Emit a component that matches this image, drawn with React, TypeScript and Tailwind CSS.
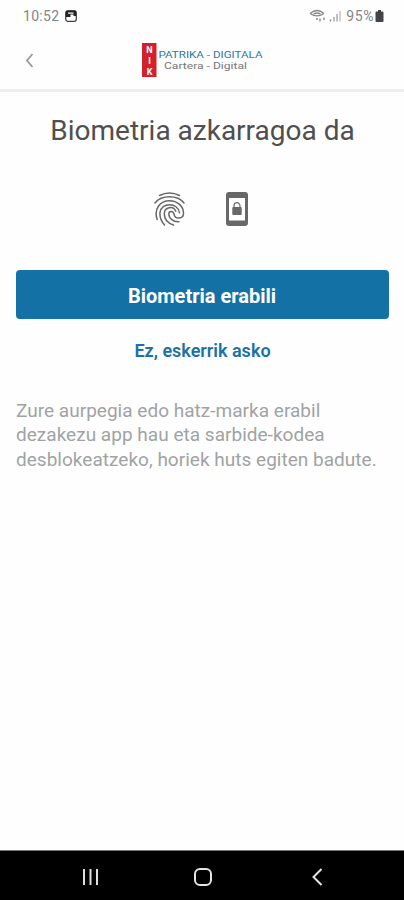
function StatusBar() {
  return (
    <div className="flex h-8 items-center justify-between pr-5 pl-[23px] text-[#858585]">
      <div className="flex items-center gap-1.5">
        <span className="text-[14px] leading-none tracking-[0.3px]">10:52</span>
        <svg className="size-3" viewBox="0 0 12 12">
          <rect x="0.7" y="0.7" width="10.6" height="10.6" rx="2.2" fill="#fff" stroke="#444" strokeWidth="1.300" />
          <path d="M1 1h10v5H8.500V4.500H5.500V7H1z" fill="#222" />
          <rect x="3" y="2.500" width="5.500" height="1.200" fill="#fff" />
        </svg>
      </div>
      <div className="flex items-center">
        <svg className="mr-0.5 h-3.5 w-[35px]" viewBox="0 0 35 14" fill="none" stroke="#888">
          <path d="M1 4.500Q8 -1.500 15 4.500M1.500 4.800Q8 9 14.500 4.800M4.500 5Q8 3 11.500 5" strokeWidth="1.300" />
          <path d="M7 10h2M11 9.500v3M15 8.500v2.500M21.500 10.500v2" strokeWidth="1.400" />
          <path d="M25 8v4.500M28 5v7.500" strokeWidth="1.500" stroke="#aaa" />
          <path d="M31 2v10.500" strokeWidth="1.300" stroke="#bbb" />
        </svg>
        <span className="text-[14px] leading-none tracking-[0.6px]">95%</span>
        <svg className="ml-px h-3 w-[9px]" viewBox="0 0 9 12" fill="#444">
          <path d="M3 0h3v1.500h1.500q1 0 1 1V11q0 1-1 1h-6q-1 0-1-1V2.500q0-1 1-1H3z" />
        </svg>
      </div>
    </div>
  )
}

function Logo() {
  return (
    <svg className="h-9 w-[124px]" viewBox="0 0 124 36" fontFamily="Roboto, sans-serif">
      <rect x="2" y="0" width="14.500" height="34" fill="#d3202b" />
      <g fill="#fff" fontSize="9" fontWeight="700" textAnchor="middle">
        <text x="9.500" y="9.500">N</text>
        <text x="9.500" y="20.500">I</text>
        <text x="9.500" y="31.500">K</text>
      </g>
      <text x="18.500" y="14.500" fontSize="9.500" fill="#2d77a5" textLength="104" lengthAdjust="spacingAndGlyphs">
        PATRIKA - DIGITALA
      </text>
      <text x="24" y="26" fontSize="9.500" fill="#777" textLength="83" lengthAdjust="spacingAndGlyphs">
        Cartera - Digital
      </text>
    </svg>
  )
}

function Header() {
  return (
    <header className="grid h-[60px] grid-cols-[1fr_124px_1fr] items-center border-b-3 border-[#eee]">
      <button type="button" aria-label="Atzera" className="ml-6 w-3">
        <svg className="h-4 w-3" viewBox="0 0 12 16" fill="none" stroke="#999" strokeWidth="1.800">
          <path d="M8.500 1 3 7.500 8.500 14" />
        </svg>
      </button>
      <Logo />
    </header>
  )
}

function FingerprintIcon() {
  return (
    <svg
      className="h-[34px] w-[31px]"
      viewBox="0 0 31 34"
      fill="none"
      stroke="#686868"
      strokeWidth="1.500"
      strokeLinecap="round"
    >
      <path d="M5.500 3.500Q15.500-1.500 25.500 3.500" />
      <path d="M1 11Q6 4.800 15.500 4.800T30 11" />
      <path d="M3.200 27.500C-.5 17 6 8.800 15.500 8.800c8 0 14 5.500 14 12.500 0 6-8.500 6.500-9.500.8-.6-3.500-5-3.600-5.200-.3 0 4.500 4.500 8.500 10.200 8" />
      <path d="M10.500 33C6.500 28.500 5.500 25 6 20.500c1.200-10.300 18-10.500 19.500.3" />
      <path d="M19.500 33C13 31 10.300 26.500 10.300 21.800c0-7 9-8.500 11.500-2.500" />
    </svg>
  )
}

function PhoneLockIcon() {
  return (
    <svg className="h-[34px] w-[22px]" viewBox="0 0 22 34">
      <rect width="22" height="34" rx="3" fill="#686868" />
      <rect x="3" y="6" width="16" height="22.500" fill="#fff" />
      <rect x="6.300" y="15" width="9.400" height="8" rx="1" fill="#686868" />
      <path d="M8 15.500v-1.800a3 3 0 0 1 6 0v1.800" fill="none" stroke="#686868" strokeWidth="1.200" />
    </svg>
  )
}

function NavigationBar() {
  return (
    <nav className="flex h-[50px] items-center justify-between border-t border-[#777] bg-black pt-0.5 pr-[81px] pl-[81px]">
      <svg className="h-5 w-5" viewBox="0 0 20 20" fill="none" stroke="#ddd" strokeWidth="2">
        <path d="M3 2v16M9.500 2v16M16 2v16" />
      </svg>
      <svg className="mr-1.5 h-5 w-5" viewBox="0 0 20 20" fill="none" stroke="#e5e5e5" strokeWidth="2">
        <rect x="2" y="2" width="16" height="16" rx="5" />
      </svg>
      <svg className="h-5 w-3" viewBox="0 0 12 20" fill="none" stroke="#e5e5e5" strokeWidth="2">
        <path d="M10.500 2 2.500 10l8 8" />
      </svg>
    </nav>
  )
}

export default function App() {
  return (
    <div className="flex h-screen w-full flex-col bg-[#fefefe] font-[Roboto,sans-serif]">
      <StatusBar />
      <Header />
      <main className="flex flex-1 flex-col pr-[15px] pl-4 pt-[21px]">
        <h1 className="text-center text-[28px] leading-9 whitespace-nowrap text-[#4f4f4f]">
          Biometria azkarragoa da
        </h1>
        <div className="mt-[43px] mr-1 flex items-center justify-center gap-[41px]">
          <FingerprintIcon />
          <PhoneLockIcon />
        </div>
        <button type="button" className="mt-11 h-[49px] rounded-[4px] bg-[#1471a6] pt-0.5 pr-px text-[20px] font-bold text-white">
          Biometria erabili
        </button>
        <button type="button" className="mt-[18px] h-6 text-[18px] font-semibold text-[#1b72a5]">
          Ez, eskerrik asko
        </button>
        <p className="mt-[38px] text-[19px] leading-[24.250px] tracking-[0.020px] whitespace-nowrap text-[#a0a3a4]">
          Zure aurpegia edo hatz-marka erabil
          <br />
          dezakezu app hau eta sarbide-kodea
          <br />
          desblokeatzeko, horiek huts egiten badute.
        </p>
      </main>
      <NavigationBar />
    </div>
  )
}
